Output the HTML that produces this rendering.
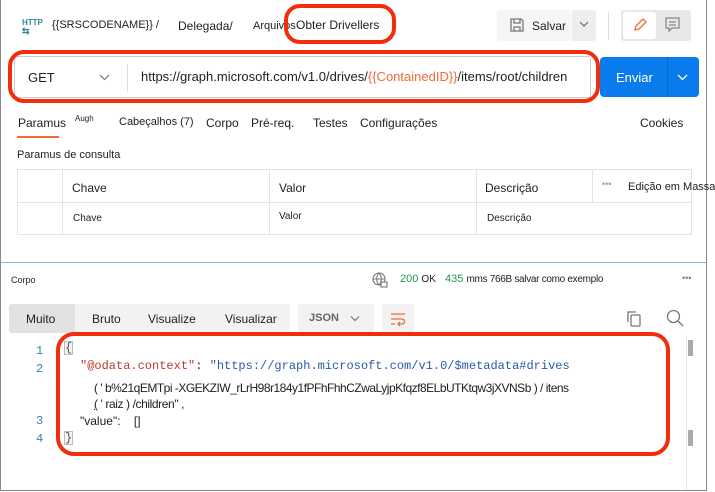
<!DOCTYPE html>
<html><head><meta charset="utf-8"><style>
*{margin:0;padding:0;box-sizing:border-box}
body{width:715px;height:492px;background:#fff;font-family:"Liberation Sans",Arial,sans-serif;color:#212121;position:relative;overflow:hidden;font-size:12px}
.a{position:absolute;white-space:nowrap}
.frame{position:absolute;left:0;top:0;width:707px;height:491px;border:1px solid #8a8a8a;border-top:none}
.red{position:absolute;border:4px solid #f02d0c;border-radius:16px}
.mono{font-family:"Liberation Mono",monospace}
</style></head><body>
<div class="frame"></div>
<!-- header -->
<div class="a" style="left:22px;top:19px;font-size:8px;color:#2a8a9a;font-weight:bold;line-height:8px">HTTP<br><span style="font-size:9px">⇆</span></div>
<div class="a" style="left:52px;top:19px;font-size:11px">{{SRSCODENAME}} /</div>
<div class="a" style="left:178px;top:19px;font-size:12px">Delegada/</div>
<div class="a" style="left:253px;top:20px;font-size:11px">Arquivos</div>
<div class="a" style="left:296px;top:18px;font-size:12px">Obter Drivellers</div>
<div class="red" style="left:284px;top:4px;width:112px;height:40px"></div>
<div class="a" style="left:497px;top:10px;width:74px;height:31px;background:#f5f5f5;border-radius:3px"></div>
<svg class="a" style="left:509px;top:17px" width="16" height="16" viewBox="0 0 16 16" fill="none" stroke="#777" stroke-width="1.3"><path d="M2 2h10l2 2v10H2z"/><path d="M5 2v4h6V2M5 14v-4h6v4"/></svg>
<div class="a" style="left:532px;top:19px;font-size:12px">Salvar</div>
<div class="a" style="left:572px;top:10px;width:24px;height:31px;background:#eee;border-radius:0 3px 3px 0"></div>
<svg class="a" style="left:579px;top:20px" width="10" height="8" viewBox="0 0 10 8" fill="none" stroke="#666" stroke-width="1.2"><path d="M1 2l4 4 4-4"/></svg>
<div class="a" style="left:608px;top:12px;width:1px;height:28px;background:#ddd"></div>
<div class="a" style="left:621px;top:10px;width:70px;height:31px;background:#e8e8e8;border-radius:3px"></div>
<div class="a" style="left:623px;top:12px;width:33px;height:27px;background:#fff;border-radius:3px"></div>
<svg class="a" style="left:632px;top:17px" width="16" height="16" viewBox="0 0 16 16" fill="none" stroke="#f26b3a" stroke-width="1.3"><path d="M3 13l1-4 7-7 3 3-7 7z"/></svg>
<svg class="a" style="left:665px;top:17px" width="15" height="16" viewBox="0 0 15 16" fill="none" stroke="#888" stroke-width="1.3"><path d="M1 1h13v10H7l-3 3v-3H1z"/><path d="M4 5h7M4 8h7"/></svg>
<!-- URL bar -->
<div class="a" style="left:14px;top:56px;width:577px;height:42px;border:1px solid #ccc;border-radius:3px"></div>
<div class="red" style="left:8px;top:50px;width:592px;height:53px"></div>
<div class="a" style="left:28px;top:70px;font-size:13px">GET</div>
<svg class="a" style="left:99px;top:73px" width="11" height="8" viewBox="0 0 11 8" fill="none" stroke="#777" stroke-width="1.2"><path d="M1 2l4.5 4.5L10 2"/></svg>
<div class="a" style="left:127px;top:64px;width:1px;height:28px;background:#ddd"></div>
<div class="a" style="left:141px;top:69px;font-size:13px">https://graph.microsoft.com/v1.0/drives/<span style="color:#f26b3a">{{ContainedID}}</span>/items/root/children</div>
<div class="a" style="left:600px;top:57px;width:99px;height:40px;background:#097bed;border-radius:4px"></div>
<div class="a" style="left:667px;top:57px;width:1px;height:40px;background:#0a66c6"></div>
<div class="a" style="left:616px;top:70px;font-size:13px;color:#fff">Enviar</div>
<svg class="a" style="left:677px;top:73px" width="11" height="8" viewBox="0 0 11 8" fill="none" stroke="#fff" stroke-width="1.3"><path d="M1 2l4.5 4.5L10 2"/></svg>
<!-- tabs -->
<div class="a" style="left:18px;top:116px;font-size:12px">Paramus</div>
<div class="a" style="left:17px;top:136px;width:42px;height:2px;background:#f26b3a"></div>
<div class="a" style="left:75px;top:114px;font-size:8px">Augh</div>
<div class="a" style="left:119px;top:116px;font-size:11px">Cabeçalhos (7)</div>
<div class="a" style="left:206px;top:116px;font-size:12px">Corpo</div>
<div class="a" style="left:251px;top:116px;font-size:12px">Pré-req.</div>
<div class="a" style="left:313px;top:116px;font-size:12px">Testes</div>
<div class="a" style="left:360px;top:116px;font-size:12px">Configurações</div>
<div class="a" style="left:640px;top:116px;font-size:12px">Cookies</div>
<div class="a" style="left:17px;top:149px;font-size:11px">Paramus de consulta</div>
<!-- table -->
<div class="a" style="left:17px;top:169px;width:675px;height:66px;border:1px solid #e4e4e4"></div>
<div class="a" style="left:17px;top:202px;width:675px;height:1px;background:#e4e4e4"></div>
<div class="a" style="left:62px;top:169px;width:1px;height:66px;background:#e4e4e4"></div>
<div class="a" style="left:269px;top:169px;width:1px;height:66px;background:#e4e4e4"></div>
<div class="a" style="left:476px;top:169px;width:1px;height:66px;background:#e4e4e4"></div>
<div class="a" style="left:592px;top:169px;width:1px;height:33px;background:#e4e4e4"></div>
<div class="a" style="left:72px;top:181px;font-size:12px">Chave</div>
<div class="a" style="left:279px;top:181px;font-size:12px">Valor</div>
<div class="a" style="left:485px;top:181px;font-size:12px">Descrição</div>
<div class="a" style="left:602px;top:179px;font-size:9px;color:#999">•••</div>
<div class="a" style="left:628px;top:181px;font-size:11px">Edição em Massa</div>
<div class="a" style="left:73px;top:213px;font-size:10px">Chave</div>
<div class="a" style="left:279px;top:211px;font-size:10px">Valor</div>
<div class="a" style="left:487px;top:213px;font-size:10px">Descrição</div>
<!-- divider -->
<div class="a" style="left:1px;top:262px;width:705px;height:1px;background:#8fb4e6"></div>
<div class="a" style="left:11px;top:275px;font-size:9px">Corpo</div>
<svg class="a" style="left:372px;top:272px" width="16" height="16" viewBox="0 0 16 16" fill="none" stroke="#777" stroke-width="1.1"><circle cx="7" cy="7" r="6"/><path d="M1 7h12M7 1c-3 3-3 9 0 12M7 1c3 3 3 9 0 12"/><rect x="9" y="10" width="6" height="5" fill="#fff"/></svg>
<div class="a" style="left:400px;top:273px;font-size:11px"><span style="color:#1e9a4a">200</span> <span style="font-size:10px">OK</span> &nbsp;&nbsp;<span style="color:#1e9a4a">435</span> <span style="font-size:10px;letter-spacing:-0.3px">mms 766B salvar como exemplo</span></div>
<div class="a" style="left:682px;top:273px;font-size:9px;color:#777">•••</div>
<!-- body toolbar -->
<div class="a" style="left:9px;top:304px;width:281px;height:29px;background:#f2f2f2;border-radius:3px"></div>
<div class="a" style="left:9px;top:304px;width:66px;height:29px;background:#e2e2e2;border-radius:3px 0 0 3px"></div>
<div class="a" style="left:26px;top:312px;font-size:12px">Muito</div>
<div class="a" style="left:92px;top:312px;font-size:12px">Bruto</div>
<div class="a" style="left:148px;top:312px;font-size:12px">Visualize</div>
<div class="a" style="left:225px;top:312px;font-size:12px">Visualizar</div>
<div class="a" style="left:298px;top:304px;width:76px;height:29px;background:#f2f2f2;border-radius:3px"></div>
<div class="a" style="left:309px;top:312px;font-size:11px;color:#666;font-weight:bold">JSON</div>
<svg class="a" style="left:350px;top:315px" width="10" height="7" viewBox="0 0 10 7" fill="none" stroke="#777" stroke-width="1.2"><path d="M1 1.5l4 4 4-4"/></svg>
<div class="a" style="left:382px;top:304px;width:32px;height:29px;background:#f2f2f2;border-radius:3px"></div>
<svg class="a" style="left:390px;top:311px" width="16" height="16" viewBox="0 0 16 16" fill="none" stroke="#f26b3a" stroke-width="1.3"><path d="M1 3h14M1 8h11a2.5 2.5 0 0 1 0 5H8M1 13h4M10 11l-2 2 2 2"/></svg>
<svg class="a" style="left:626px;top:310px" width="16" height="17" viewBox="0 0 16 17" fill="none" stroke="#777" stroke-width="1.3"><rect x="5" y="5" width="9" height="11" rx="1"/><path d="M2 12V2h8"/></svg>
<svg class="a" style="left:666px;top:309px" width="18" height="18" viewBox="0 0 18 18" fill="none" stroke="#777" stroke-width="1.3"><circle cx="7.5" cy="7.5" r="6"/><path d="M12 12l5 5"/></svg>
<!-- code -->
<div class="a mono" style="left:36px;top:342px;font-size:12px;color:#3c7fa8;line-height:18px;text-align:right">1<br>2</div>
<div class="a mono" style="left:36px;top:412px;font-size:12px;color:#3c7fa8;line-height:18px">3<br>4</div>
<div class="a mono" style="left:64px;top:341px;font-size:12px;color:#555;border:1px solid #bbb;background:#f3f3f3;line-height:12px">{</div>
<div class="a mono" style="left:64px;top:431px;font-size:12px;color:#555;border:1px solid #bbb;background:#f3f3f3;line-height:12px">}</div>
<div class="a mono" style="left:80px;top:359px;font-size:12px"><span style="color:#c0392b">"@odata.context"</span>: <span style="color:#2a5aa8">"https://graph.microsoft.com/v1.0/$metadata#drives</span></div>
<div class="a" style="left:94px;top:381px;font-size:12px;letter-spacing:-0.5px">( ' b%21qEMTpi -XGEKZIW_rLrH98r184y1fPFhFhhCZwaLyjpKfqzf8ELbUTKtqw3jXVNSb ) / itens</div>
<div class="a" style="left:94px;top:397px;font-size:12px;letter-spacing:-0.4px"><u>(</u> ' raiz ) /children" ,</div>
<div class="a" style="left:80px;top:414px;font-size:12px">"value":&nbsp;&nbsp;&nbsp;&nbsp;[]</div>
<div class="a" style="left:688px;top:340px;width:5px;height:16px;background:#aaa"></div>
<div class="a" style="left:688px;top:430px;width:5px;height:16px;background:#aaa"></div>
<div class="a" style="left:686px;top:335px;width:1px;height:155px;background:#e4e4e4"></div>
<div class="red" style="left:56px;top:332px;width:614px;height:124px;border-radius:18px"></div>
</body></html>
